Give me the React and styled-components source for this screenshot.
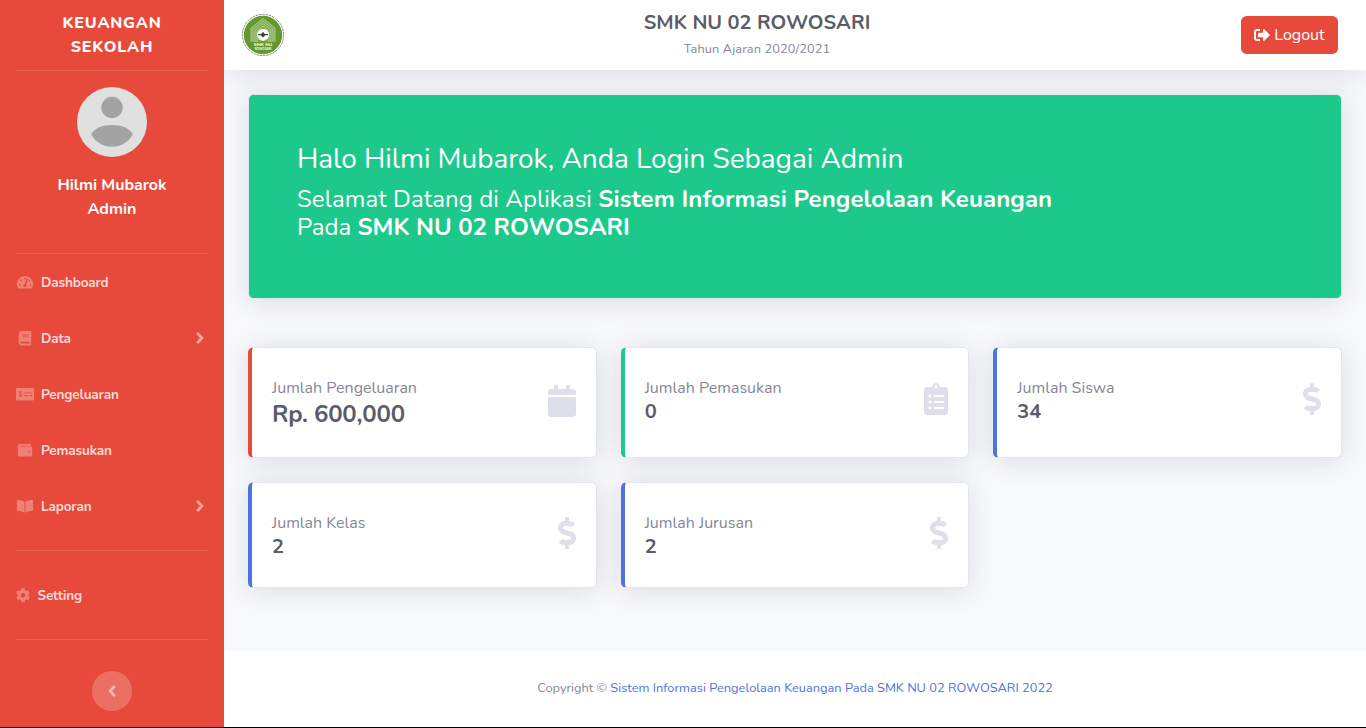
import React from "react";
import styled, { createGlobalStyle } from "styled-components";
import {
  FaTachometerAlt,
  FaBook,
  FaMoneyCheckAlt,
  FaWallet,
  FaBookOpen,
  FaCog,
  FaAngleRight,
  FaAngleLeft,
  FaSignOutAlt,
  FaCalendar,
  FaClipboardList,
  FaDollarSign,
} from "react-icons/fa";

const GlobalStyle = createGlobalStyle`
  *, *::before, *::after { box-sizing: border-box; }
  body {
    margin: 0;
    background: #fff;
    color: #858796;
    font: 400 16px/1.5 Nunito, Lato, "Open Sans", sans-serif;
    overflow: hidden;
  }
  h1, h2, h3, h4, p { margin: 0; }
`;

const Page = styled.div`
  display: flex;
  height: 728px;
  border-bottom: 1px solid #000;
`;

const Sidebar = styled.nav`
  position: relative;
  z-index: 1;
  flex: 0 0 224px;
  display: flex;
  flex-direction: column;
  background: #e74a3b;
  color: #fff;
`;

const Brand = styled.div`
  height: 70px;
  padding: 11px 16px 0;
  text-align: center;
  font-weight: 800;
  line-height: 24px;
  letter-spacing: 0.8px;
`;

const Divider = styled.hr`
  width: 192px;
  height: 1px;
  flex: none;
  margin: ${(p) => p.$margin || "0 16px"};
  border: 0;
  background: rgba(255, 255, 255, 0.15);
`;

const Profile = styled.div`
  height: 182px;
  padding-top: 16px;
  display: flex;
  flex-direction: column;
  align-items: center;
  text-align: center;
  font-weight: 700;

  svg { margin-bottom: 16px; }
`;

const Line = styled.span`
  display: block;
  white-space: nowrap;
  letter-spacing: ${(p) => p.$ls || "inherit"};
`;

const NavItem = styled.a`
  height: 56px;
  flex: none;
  padding: 2px 16px 0;
  display: flex;
  align-items: center;
  font-size: 13.6px;
  font-weight: 700;
  letter-spacing: -0.18px;
  color: rgba(255, 255, 255, 0.8);

  .arrow {
    margin-left: auto;
    margin-right: -1px;
    margin-bottom: 2px;
    font-size: 18px;
    color: rgba(255, 255, 255, 0.5);
  }
`;

const NavIcon = styled.span`
  width: ${(p) => (p.$narrow ? "14px" : "17px")};
  margin-right: ${(p) => (p.$narrow ? "7.5px" : "8px")};
  margin-bottom: 1px;
  display: flex;
  justify-content: center;
  color: rgba(255, 255, 255, 0.3);

  svg {
    flex: none;
    width: 18px;
    height: 14.4px;
  }
`;

const Toggle = styled.button`
  width: 40px;
  height: 40px;
  margin: 31px auto 0;
  padding: 0 1px 0 0;
  display: flex;
  align-items: center;
  justify-content: center;
  border: 0;
  border-radius: 50%;
  background: rgba(255, 255, 255, 0.2);
  color: rgba(255, 255, 255, 0.5);
  font-size: 18px;
`;

const Main = styled.div`
  flex: 1;
  display: flex;
  flex-direction: column;
  background: #f8f9fc;
`;

const Topbar = styled.header`
  height: 70px;
  flex: none;
  padding: 0 28px 0 17px;
  display: flex;
  align-items: center;
  background: #fff;
  box-shadow: 0 2.4px 28px rgba(58, 59, 69, 0.15);
`;

const Heading = styled.div`
  flex: 1;
  padding: 0 12px 1px 0;
  text-align: center;
`;

const School = styled.h1`
  font-size: 20px;
  font-weight: 700;
  line-height: 24px;
  color: #5a5c69;
`;

const Year = styled.p`
  margin-top: 5px;
  font-size: 12.8px;
  line-height: 19px;
  letter-spacing: 0.09px;
`;

const Logout = styled.button`
  width: 97px;
  height: 38px;
  padding: 0;
  display: flex;
  align-items: center;
  justify-content: center;
  gap: 4px;
  border: 0;
  border-radius: 5.6px;
  background: #e74a3b;
  color: #fff;
  font: inherit;
`;

const Content = styled.main`
  flex: 1;
  padding: 24.4px 24px 0;
`;

const Banner = styled.section`
  height: 204.8px;
  margin-bottom: 48px;
  padding: 48px;
  border: 1px solid #e3e6f0;
  border-radius: 5.6px;
  background: #1cc88a;
  color: #fff;
  box-shadow: 0 2.4px 28px rgba(58, 59, 69, 0.15);
`;

const Greeting = styled.h2`
  margin-bottom: 8px;
  font-size: 28px;
  font-weight: 400;
  line-height: 33.6px;
  letter-spacing: -0.03px;
`;

const Welcome = styled.h3`
  font-size: 24px;
  font-weight: 400;
  line-height: 28px;
`;

const Cards = styled.section`
  display: grid;
  grid-template-columns: repeat(3, 1fr);
  gap: 24px;
`;

const Card = styled.article`
  padding: 28px 20px;
  display: flex;
  align-items: flex-start;
  justify-content: space-between;
  border: 1px solid #e3e6f0;
  border-left: 4px solid ${(p) => p.$accent};
  border-radius: 5.6px;
  background: #fff;
  box-shadow: 0 2.4px 28px rgba(58, 59, 69, 0.15);
`;

const Value = styled.h4`
  font-size: ${(p) => (p.$large ? "24px" : "20px")};
  font-weight: 700;
  line-height: 1.2;
  letter-spacing: ${(p) => (p.$large ? "-0.22px" : "normal")};
  color: #5a5c69;
`;

const CardIcon = styled.span`
  display: flex;
  margin-top: ${(p) => (p.$large ? "9px" : "6.5px")};
  color: #dddfeb;

  svg {
    width: ${(p) => p.$width}px;
    height: 32px;
  }
`;

const Footer = styled.footer`
  height: 76px;
  flex: none;
  display: flex;
  align-items: center;
  justify-content: center;
  background: #fff;
  font-size: 12.8px;

  a { color: #4e73df; }
`;

const Avatar = () => (
  <svg width="70" height="70" viewBox="0 0 70 70">
    <circle cx="35" cy="35" r="35" fill="#e0e0e0" />
    <circle cx="35" cy="20.5" r="10.7" fill="#a3a3a3" />
    <path d="M14.3 47.5C17 41 26 38 35 38s18 3 20.8 9.500C51 56 43.500 59.700 35 59.700S19 56 14.300 47.500Z" fill="#a3a3a3" />
  </svg>
);

const Logo = () => (
  <svg width="44" height="44" viewBox="0 0 44 44">
    <circle cx="22" cy="22" r="20.600" fill="#fff" stroke="#66725a" strokeWidth=".8" strokeDasharray="2.500 .8" />
    <circle cx="22" cy="22" r="19.200" fill="#64982f" />
    <path d="M10 29V15L22 5.500 34 15v14Z" fill="#7ba84e" />
    <g fill="none" stroke="#b4d09a" strokeWidth=".9">
      <path d="M10 29V15L22 5.500 34 15V29" />
      <path d="M12 29V16L22 8l10 8V29" />
      <path d="M14 29V17l8-6.500 8 6.500V29" />
      <path d="M16 29V18l6-5 6 5V29" />
    </g>
    <circle cx="22" cy="21.700" r="6" fill="#fff" />
    <path d="M17 21.700h10M22 19.200v5" stroke="#39423a" strokeWidth="1.300" />
    <circle cx="22" cy="21.700" r="2" fill="#39423a" />
    <path d="M13 29h18v3H13Z" fill="#64982f" />
    <text x="22" y="33.400" textAnchor="middle" fontSize="4.600" fontWeight="800" fill="#f2f7ec">SMK NU</text>
    <text x="22" y="37" textAnchor="middle" fontSize="2.900" fontWeight="800" fill="#f2f7ec">ROWOSARI</text>
  </svg>
);

const MENU = [
  { label: "Dashboard", Icon: FaTachometerAlt },
  { label: "Data", Icon: FaBook, arrow: true },
  { label: "Pengeluaran", Icon: FaMoneyCheckAlt },
  { label: "Pemasukan", Icon: FaWallet },
  { label: "Laporan", Icon: FaBookOpen, arrow: true },
];

const STATS = [
  { label: "Jumlah Pengeluaran", value: "Rp. 600,000", accent: "#e74a3b", Icon: FaCalendar, width: 28, large: true },
  { label: "Jumlah Pemasukan", value: "0", accent: "#1cc88a", Icon: FaClipboardList, width: 24 },
  { label: "Jumlah Siswa", value: "34", accent: "#4e73df", Icon: FaDollarSign, width: 18 },
  { label: "Jumlah Kelas", value: "2", accent: "#4e73df", Icon: FaDollarSign, width: 18 },
  { label: "Jumlah Jurusan", value: "2", accent: "#4e73df", Icon: FaDollarSign, width: 18 },
];

export default function App() {
  return (
    <>
      <GlobalStyle />
      <Page>
        <Sidebar>
          <Brand>KEUANGAN<br />SEKOLAH</Brand>
          <Divider />
          <Profile>
            <Avatar />
            <Line $ls="-0.03px">Hilmi Mubarok</Line>
            <Line>Admin</Line>
          </Profile>
          <Divider />
          {MENU.map(({ label, Icon, arrow }) => (
            <NavItem key={label}>
              <NavIcon><Icon /></NavIcon>
              <Line>{label}</Line>
              {arrow && <FaAngleRight className="arrow" />}
            </NavItem>
          ))}
          <Divider $margin="16px" />
          <NavItem>
            <NavIcon $narrow><FaCog /></NavIcon>
            <Line>Setting</Line>
          </NavItem>
          <Divider $margin="16px 16px 0" />
          <Toggle><FaAngleLeft /></Toggle>
        </Sidebar>
        <Main>
          <Topbar>
            <Logo />
            <Heading>
              <School>SMK NU 02 ROWOSARI</School>
              <Year>Tahun Ajaran 2020/2021</Year>
            </Heading>
            <Logout><FaSignOutAlt /><Line>Logout</Line></Logout>
          </Topbar>
          <Content>
            <Banner>
              <Greeting>Halo Hilmi Mubarok, Anda Login Sebagai Admin</Greeting>
              <Welcome>
                <Line $ls="0.1px">Selamat Datang di Aplikasi <b>Sistem Informasi Pengelolaan Keuangan</b></Line>
                <Line $ls="0.03px">Pada <b>SMK NU 02 ROWOSARI</b></Line>
              </Welcome>
            </Banner>
            <Cards>
              {STATS.map(({ label, value, accent, Icon, width, large }) => (
                <Card key={label} $accent={accent}>
                  <div>
                    <Line>{label}</Line>
                    <Value $large={large}>{value}</Value>
                  </div>
                  <CardIcon $large={large} $width={width}><Icon /></CardIcon>
                </Card>
              ))}
            </Cards>
          </Content>
          <Footer>
            <Line>Copyright © <a>Sistem Informasi Pengelolaan Keuangan Pada SMK NU 02 ROWOSARI 2022</a></Line>
          </Footer>
        </Main>
      </Page>
    </>
  );
}
